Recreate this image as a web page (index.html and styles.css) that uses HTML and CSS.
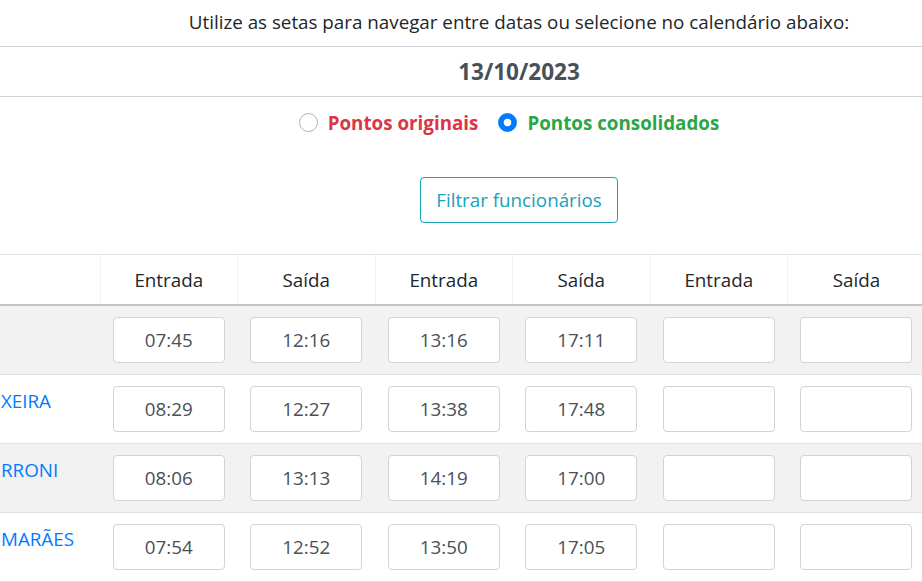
FILE: index.html
```html
<!DOCTYPE html>
<html lang="pt-BR">
<head>
<meta charset="utf-8">
<title>Pontos</title>
<link rel="stylesheet" href="styles.css">
</head>
<body>
<p class="hint">Utilize as setas para navegar entre datas ou selecione no calendário abaixo:</p>
<div class="date">13/10/2023</div>
<div class="radios">
  <label class="radio red"><span class="dot"></span>Pontos originais</label>
  <label class="radio green"><span class="dot on"></span>Pontos consolidados</label>
</div>
<div class="filter"><button class="btn-filter" type="button">Filtrar funcionários</button></div>
<table class="grid">
  <colgroup><col class="c-name"><col><col><col><col><col><col></colgroup>
  <thead>
    <tr><th></th><th>Entrada</th><th>Saída</th><th>Entrada</th><th>Saída</th><th>Entrada</th><th>Saída</th></tr>
  </thead>
  <tbody>
    <tr class="odd"><td class="name"></td>
      <td><input class="time" value="07:45" readonly></td><td><input class="time" value="12:16" readonly></td>
      <td><input class="time" value="13:16" readonly></td><td><input class="time" value="17:11" readonly></td>
      <td><input class="time" value="" readonly></td><td><input class="time" value="" readonly></td></tr>
    <tr><td class="name">XEIRA</td>
      <td><input class="time" value="08:29" readonly></td><td><input class="time" value="12:27" readonly></td>
      <td><input class="time" value="13:38" readonly></td><td><input class="time" value="17:48" readonly></td>
      <td><input class="time" value="" readonly></td><td><input class="time" value="" readonly></td></tr>
    <tr class="odd"><td class="name">RRONI</td>
      <td><input class="time" value="08:06" readonly></td><td><input class="time" value="13:13" readonly></td>
      <td><input class="time" value="14:19" readonly></td><td><input class="time" value="17:00" readonly></td>
      <td><input class="time" value="" readonly></td><td><input class="time" value="" readonly></td></tr>
    <tr><td class="name">MARÃES</td>
      <td><input class="time" value="07:54" readonly></td><td><input class="time" value="12:52" readonly></td>
      <td><input class="time" value="13:50" readonly></td><td><input class="time" value="17:05" readonly></td>
      <td><input class="time" value="" readonly></td><td><input class="time" value="" readonly></td></tr>
  </tbody>
</table>
</body>
</html>
```
FILE: styles.css
```css
html, body { margin: 0; padding: 0; }
body {
  width: 922px;
  height: 582px;
  overflow: hidden;
  background: #fff;
  font-family: "Open Sans", "Noto Sans", sans-serif;
  font-size: 18.8px;
  color: #212529;
}
.hint {
  margin: 0;
  padding: 7px 0 9px 116px;
  line-height: 30px;
  text-align: center;
}
.date {
  border-top: 1px solid #ced4da;
  border-bottom: 1px solid #ced4da;
  height: 49px;
  display: flex;
  align-items: center;
  justify-content: center;
  padding-left: 116px;
  font-weight: 700;
  font-size: 22.5px;
  color: #495057;
}
.radios {
  display: flex;
  justify-content: center;
  align-items: center;
  padding-left: 96px;
  margin-top: 12px;
  height: 27px;
}
.radio {
  display: flex;
  align-items: center;
  gap: 10px;
  font-weight: 700;
}
.radio + .radio { margin-left: 20px; }
.red { color: #dc3545; }
.green { color: #28a745; }
.dot {
  width: 19px;
  height: 19px;
  box-sizing: border-box;
  border-radius: 50%;
  border: 1px solid #adb5bd;
  background: #fff;
}
.dot.on {
  border-color: #007bff;
  background: radial-gradient(circle, #fff 0 3.5px, #007bff 4.2px);
}
.filter {
  display: flex;
  justify-content: center;
  padding-left: 116px;
  margin-top: 41px;
}
.btn-filter {
  height: 46px;
  padding: 0 15px;
  border: 1px solid #17a2b8;
  border-radius: 4px;
  background: #fff;
  color: #17a2b8;
  font-family: inherit;
  font-size: 18.8px;
}
.grid {
  margin-top: 31px;
  width: 925px;
  table-layout: fixed;
  border-collapse: collapse;
}
.c-name { width: 100px; }
.grid th {
  height: 49px;
  padding: 0;
  font-weight: 400;
  text-align: center;
  border-top: 1px solid #dee2e6;
  border-bottom: 2px solid #c4c4c4;
  border-left: 1px solid #f2f2f2;
}
.grid th:first-child { border-left: 0; }
.grid td {
  padding: 11px 0;
  text-align: center;
  vertical-align: top;
  border-bottom: 1px solid #dee2e6;
}
.grid tr.odd td { background: #f2f2f2; }
.grid td.name {
  text-align: left;
  padding: 13px 0 9px 1px;
  color: #007bff;
  line-height: 27px;
  white-space: nowrap;
  overflow: hidden;
}
.time {
  display: block;
  margin: 0 auto;
  width: 112px;
  height: 46px;
  box-sizing: border-box;
  border: 1px solid #ced4da;
  border-radius: 4px;
  background: #fff;
  font-family: inherit;
  font-size: 18.8px;
  color: #495057;
  text-align: center;
  padding: 0;
}
```
